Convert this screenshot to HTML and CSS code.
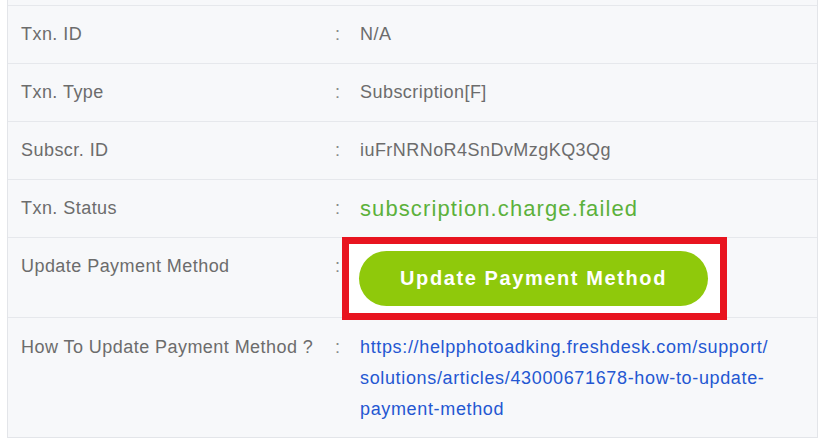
FILE: index.html
```html
<!DOCTYPE html>
<html>
<head>
<meta charset="utf-8">
<link rel="stylesheet" href="styles.css">
</head>
<body>
<div class="table">
  <div class="stub"></div>
  <div class="row">
    <div class="label">Txn. ID</div>
    <div class="colon">:</div>
    <div class="value">N/A</div>
  </div>
  <div class="row">
    <div class="label">Txn. Type</div>
    <div class="colon">:</div>
    <div class="value">Subscription[F]</div>
  </div>
  <div class="row">
    <div class="label">Subscr. ID</div>
    <div class="colon">:</div>
    <div class="value">iuFrNRNoR4SnDvMzgKQ3Qg</div>
  </div>
  <div class="row">
    <div class="label">Txn. Status</div>
    <div class="colon">:</div>
    <div class="value status">subscription.charge.failed</div>
  </div>
  <div class="row row-btn">
    <div class="label">Update Payment Method</div>
    <div class="colon">:</div>
    <div class="value">
      <div class="highlight">
        <button class="pay-btn">Update Payment Method</button>
      </div>
    </div>
  </div>
  <div class="row row-link">
    <div class="label">How To Update Payment Method ?</div>
    <div class="colon">:</div>
    <div class="value"><a class="link" href="#">https://helpphotoadking.freshdesk.com/support/<br>solutions/articles/43000671678-how-to-update-<br>payment-method</a></div>
  </div>
</div>
</body>
</html>
```
FILE: styles.css
```css
html, body {
  margin: 0;
  padding: 0;
  background: #ffffff;
}
body {
  font-family: "Liberation Sans", Arial, sans-serif;
}
.table {
  margin-left: 7px;
  width: 811px;
  box-sizing: border-box;
  border-left: 1px solid #e3e5e9;
  border-right: 1px solid #e3e5e9;
  border-bottom: 1px solid #e3e5e9;
  background: #f7f8fa;
}
.stub {
  height: 5px;
  border-bottom: 1px solid #e6e8ec;
}
.row {
  display: grid;
  grid-template-columns: 314px 25px 1fr;
  padding: 18px 0 18px 13px;
  border-bottom: 1px solid #e6e8ec;
  font-size: 18px;
  letter-spacing: 0.45px;
  line-height: 21px;
  color: #6c6c6c;
}
.row:last-child {
  border-bottom: none;
}
.colon {
  color: #8a8a8a;
}
.value {
  color: #6c6c6c;
}
.status {
  color: #5cb13b;
  font-size: 22px;
  letter-spacing: 1.1px;
}
.row-btn {
  padding-top: 0;
  padding-bottom: 0;
  height: 79px;
}
.row-btn .label, .row-btn .colon {
  padding-top: 18px;
}
.highlight {
  margin-left: -18px;
  margin-top: -1px;
  width: 385px;
  height: 83px;
  box-sizing: border-box;
  border: 7px solid #e8141f;
  background: #ffffff;
  padding: 7px 0 0 10px;
}
.pay-btn {
  display: block;
  width: 349px;
  height: 55px;
  border: none;
  border-radius: 28px;
  background: #8fc90b;
  color: #ffffff;
  font-family: "Liberation Sans", Arial, sans-serif;
  font-weight: bold;
  font-size: 20px;
  letter-spacing: 1.6px;
  padding: 0;
}
.row-link {
  padding-top: 14px;
  padding-bottom: 12px;
  line-height: 31px;
}
.link {
  color: #2457d2;
  text-decoration: none;
  font-size: 18px;
  letter-spacing: 0.65px;
}
```
